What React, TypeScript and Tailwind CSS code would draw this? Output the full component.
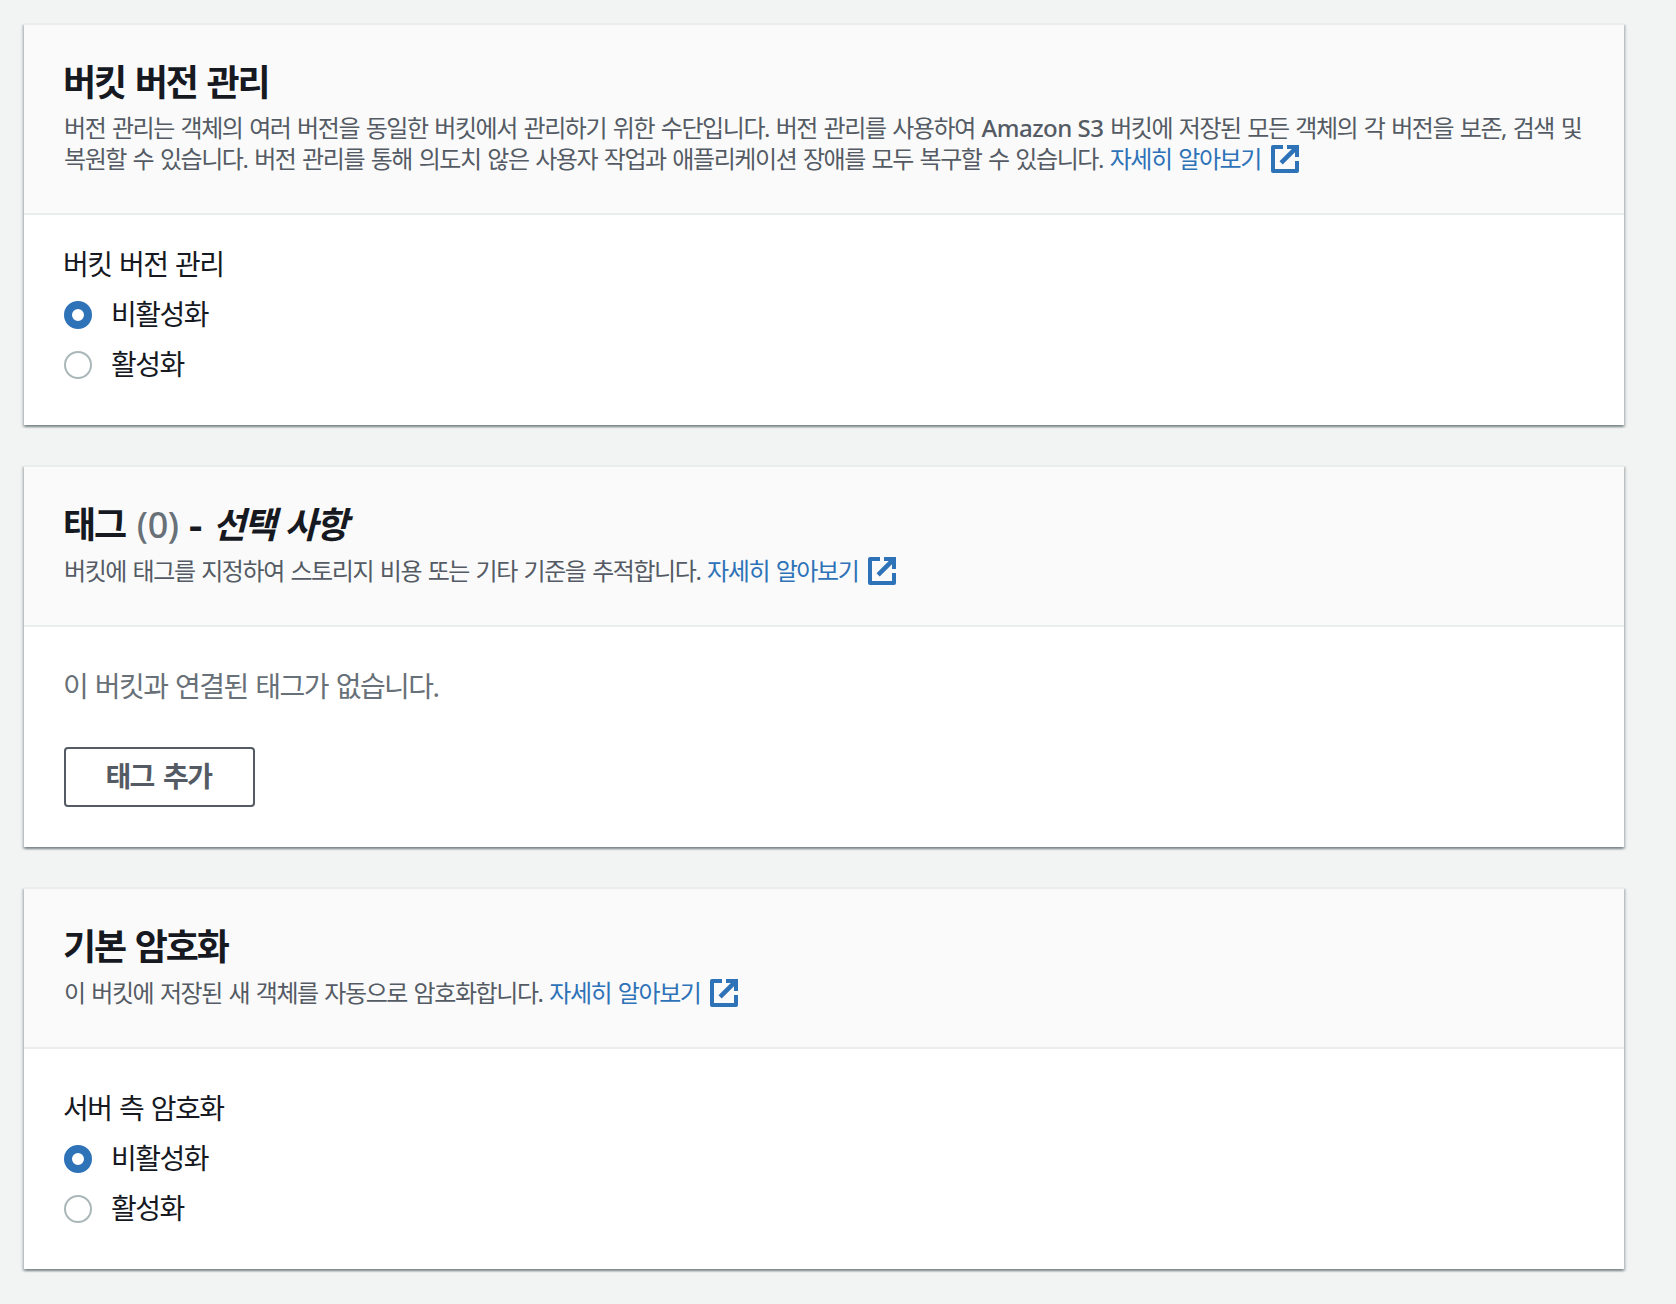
import type { ReactNode } from "react";

const ExternalIcon = () => (
  <svg
    viewBox="0 0 28 28"
    className="ml-[10px] inline-block h-7 w-7 align-[-5px]"
    fill="#2e72b8"
  >
    <path d="M2 0H12V4H4V24H24V16H28V26Q28 28 26 28H2Q0 28 0 26V2Q0 0 2 0Z" />
    <path d="M16 0H28V12H24V7.2L11.7 19.4L8.5 16.2L20.8 4H16Z" />
  </svg>
);

const LearnMore = () => (
  <a href="#" className="text-[#2e72b8]">
    자세히 알아보기
    <ExternalIcon />
  </a>
);

const Panel = ({
  title,
  description,
  headerClass,
  bodyClass,
  children,
}: {
  title: ReactNode;
  description: ReactNode;
  headerClass: string;
  bodyClass: string;
  children: ReactNode;
}) => {
  return (
    <section className="border-t-2 border-[#eaeded] bg-white shadow-[0_2px_2px_0_rgba(0,28,36,0.3),2px_2px_2px_0_rgba(0,28,36,0.15),-2px_2px_2px_0_rgba(0,28,36,0.15)]">
      <div
        className={`flex flex-col border-b-2 border-[#eaeded] bg-[#fafafa] px-10 pt-9 ${headerClass}`}
      >
        <h2 className="-ml-px text-[36px] leading-[44px] font-bold tracking-[-2.1px] whitespace-nowrap [word-spacing:2.5px]">
          {title}
        </h2>
        <p className="text-[24px] leading-[31px] tracking-[-1.42px] whitespace-nowrap text-[#545b64]">
          {description}
        </p>
      </div>
      <div className={`px-10 ${bodyClass}`}>{children}</div>
    </section>
  );
};

const Radio = ({ label, checked }: { label: string; checked?: boolean }) => (
  <label className="flex h-[50px] items-center gap-5">
    <span
      className={
        checked
          ? "h-7 w-7 rounded-full border-8 border-[#2e72b8] bg-white"
          : "h-7 w-7 rounded-full border-2 border-[#aab7b8] bg-white"
      }
    />
    <span className="-ml-px pb-[2px] leading-10">{label}</span>
  </label>
);

const App = () => {
  return (
    <main className="flex h-[1304px] w-[1676px] flex-col gap-10 bg-[#f2f3f3] pt-[23px] pr-[52px] pl-6 font-['Noto_Sans','Noto_Sans_CJK_KR',sans-serif] text-[28px] tracking-[-1.52px] text-[#16191f] [word-spacing:1.8px]">
      <Panel
        title="버킷 버전 관리"
        description={
          <>
            버전 관리는 객체의 여러 버전을 동일한 버킷에서 관리하기 위한
            수단입니다. 버전 관리를 사용하여{" "}
            <span className="font-medium tracking-[-0.5px] [word-spacing:0px]">
              Amazon S3
            </span>{" "}
            버킷에 저장된 모든 객체의 각 버전을 보존, 검색 및
            <br />
            복원할 수 있습니다. 버전 관리를 통해 의도치 않은 사용자 작업과
            애플리케이션 장애를 모두 복구할 수 있습니다. <LearnMore />
          </>
        }
        headerClass="h-[190px] gap-[7px]"
        bodyClass="h-[210px] pt-[29px]"
      >
        <p className="-ml-px mb-[6px] leading-10">버킷 버전 관리</p>
        <Radio label="비활성화" checked />
        <Radio label="활성화" />
      </Panel>

      <Panel
        title={
          <>
            태그{" "}
            <span className="ml-[2px] font-medium tracking-[-0.4px] text-[#687078]">
              (0)
            </span>{" "}
            <span className="ml-px inline-block origin-left scale-x-115 tracking-[1px]">
              -
            </span>{" "}
            <i className="ml-px">선택 사항</i>
          </>
        }
        description={
          <>
            버킷에 태그를 지정하여 스토리지 비용 또는 기타 기준을 추적합니다.{" "}
            <LearnMore />
          </>
        }
        headerClass="h-[160px] gap-2"
        bodyClass="h-[220px] pt-[39px]"
      >
        <p className="-ml-px leading-10 text-[#687078]">
          이 버킷과 연결된 태그가 없습니다.
        </p>
        <button className="mt-[41px] flex h-[60px] w-[191px] items-center justify-center rounded-[4px] border-2 border-[#545b64] bg-white pr-[2px] pb-[2px] font-bold text-[#545b64] [word-spacing:3.5px]">
          태그 추가
        </button>
      </Panel>

      <Panel
        title="기본 암호화"
        description={
          <>
            이 버킷에 저장된 새 객체를 자동으로 암호화합니다. <LearnMore />
          </>
        }
        headerClass="h-[160px] gap-2"
        bodyClass="h-[220px] pt-[39px]"
      >
        <p className="-ml-px mb-[6px] leading-10">서버 측 암호화</p>
        <Radio label="비활성화" checked />
        <Radio label="활성화" />
      </Panel>
    </main>
  );
};
export default App;
